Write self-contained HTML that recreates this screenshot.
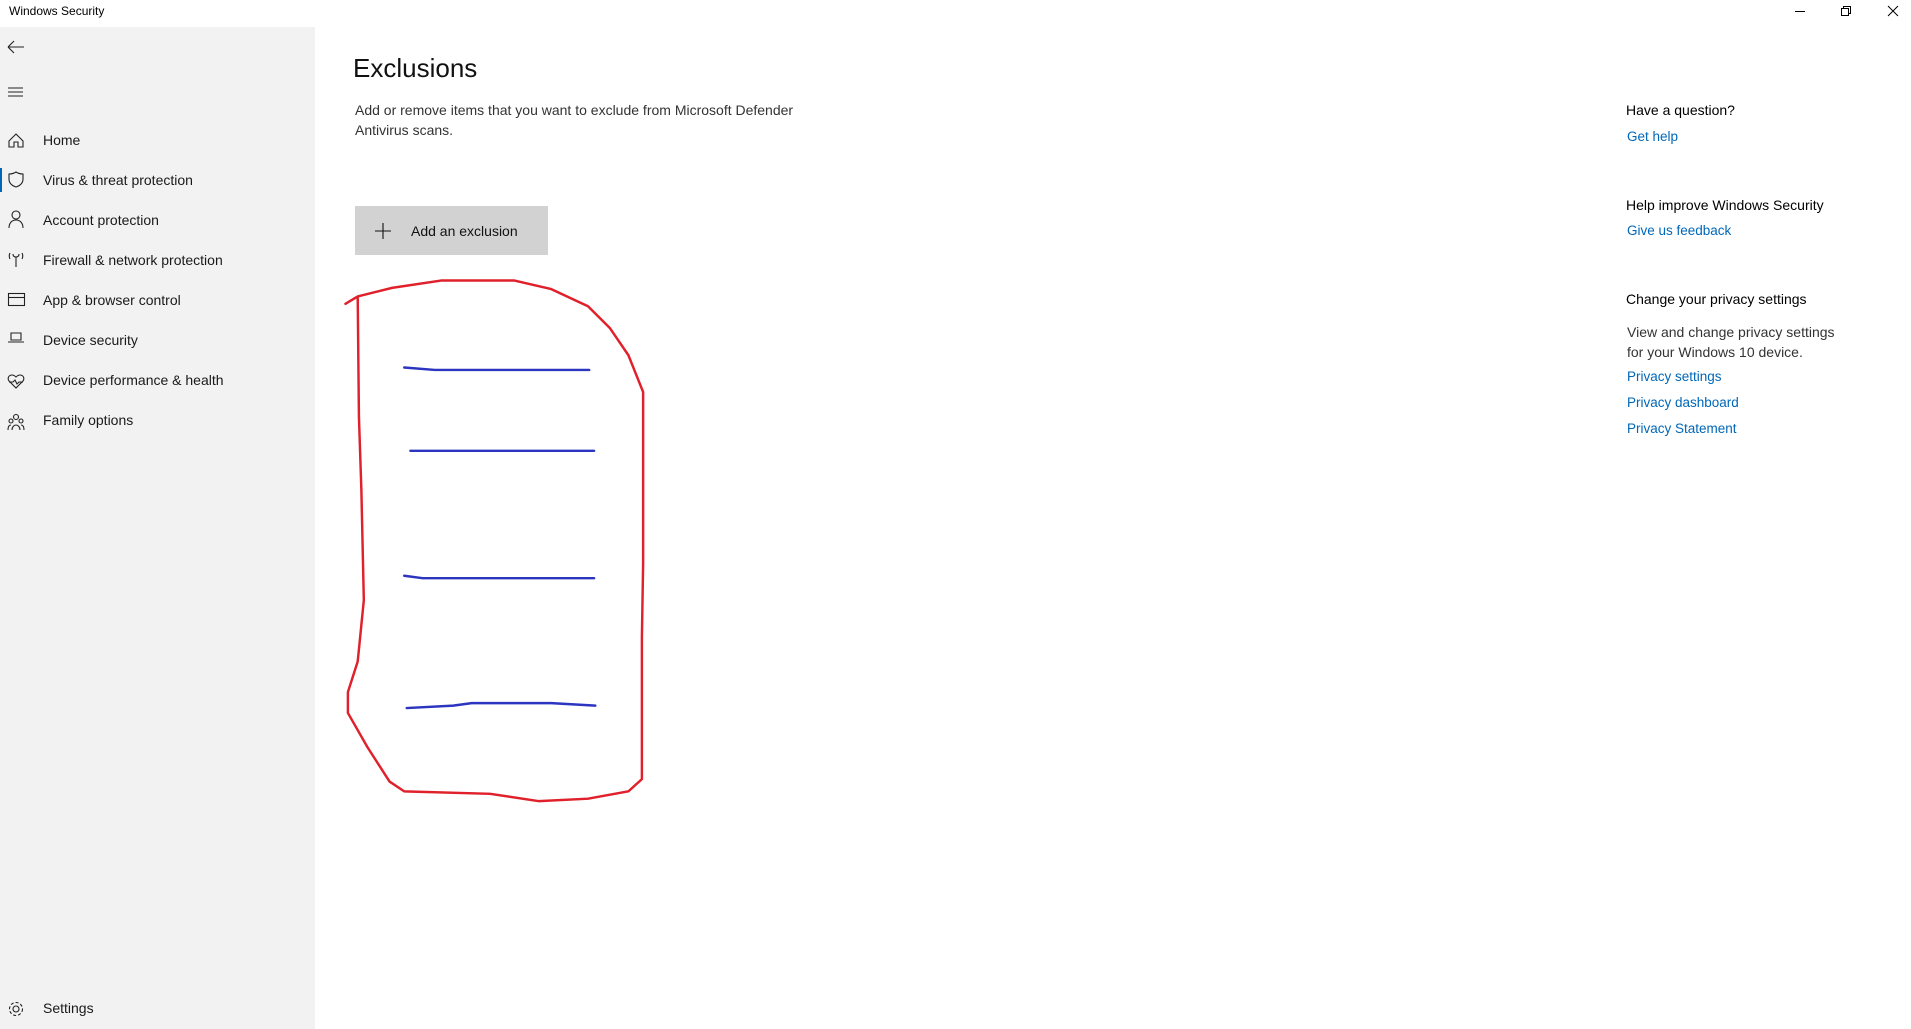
<!DOCTYPE html>
<html><head><meta charset="utf-8"><style>
*{margin:0;padding:0;box-sizing:border-box}
body{width:1911px;height:1029px;background:#fff;font-family:"Segoe UI","Liberation Sans",sans-serif;color:#000;position:relative;overflow:hidden}
.abs{position:absolute;white-space:nowrap}
.side{position:absolute;left:0;top:27px;width:315px;height:1002px;background:#f2f2f2}
.nav{position:absolute;left:43px;font-size:14px;color:#1a1a1a}
.t15{font-size:14px}
.link{color:#0067b8;font-size:13.5px}
</style></head><body>
<div class="abs" style="left:9px;top:4px;font-size:12px">Windows Security</div>
<svg class="abs" style="left:1780px;top:0" width="131" height="24">
<line x1="15" y1="11.5" x2="25" y2="11.5" stroke="#000"/>
<rect x="61.5" y="8.5" width="7" height="7" fill="none" stroke="#000"/>
<path d="M63.5 8.5V6.5h7v7h-2" fill="none" stroke="#000"/>
<path d="M108 6l10 10M118 6l-10 10" stroke="#000"/>
</svg>
<div class="side"></div>
<div class="abs" style="left:0;top:168px;width:2px;height:24px;background:#0067b8"></div>
<svg class="abs" style="left:0;top:0" width="315" height="1029" fill="none" stroke="#222" stroke-width="1.1">
<path d="M8 47h16M8 47l6-6M8 47l6 6"/>
<path d="M8 88h15M8 92h15M8 96h15"/>
<path d="M9 141l7-7 7 7v6h-5v-5h-4v5h-5z"/>
<path d="M16 172c3 2 5 2 7 2v5c0 5-4 7-7 8-3-1-7-3-7-8v-5c2 0 4 0 7-2z"/>
<circle cx="16" cy="215" r="4"/><path d="M9 228c0-5 3-8 7-8s7 3 7 8"/>
<path d="M16 257v10M13 254c0 2 1 3 3 3s3-1 3-3M10 253c-1 2-1 4 0 6M22 253c1 2 1 4 0 6"/>
<rect x="8.5" y="293.5" width="16" height="12"/><path d="M8.5 297.5h16"/>
<path d="M11 333h10v7H11zM8 342h16"/>
<path d="M16 388l-7-7c-2-3 0-6 3-6 2 0 3 1 4 2 1-1 2-2 4-2 3 0 5 3 3 6zM9 382h4l2-2 2 4 2-2h4"/>
<circle cx="16" cy="417" r="2.5"/><circle cx="11" cy="421" r="2"/><circle cx="21" cy="421" r="2"/>
<path d="M8 430c0-3 1-5 3-5M24 430c0-3-1-5-3-5M12 430c0-3 2-5 4-5s4 2 4 5"/>
<circle cx="16" cy="1009" r="3"/><circle cx="16" cy="1009" r="6.5" stroke-dasharray="3 2"/>
</svg>
<div class="nav" style="top:132px">Home</div>
<div class="nav" style="top:172px">Virus &amp; threat protection</div>
<div class="nav" style="top:212px">Account protection</div>
<div class="nav" style="top:252px">Firewall &amp; network protection</div>
<div class="nav" style="top:292px">App &amp; browser control</div>
<div class="nav" style="top:332px">Device security</div>
<div class="nav" style="top:372px">Device performance &amp; health</div>
<div class="nav" style="top:412px">Family options</div>
<div class="nav" style="top:1000px">Settings</div>

<div class="abs" style="left:353px;top:53px;font-size:26px;color:#111">Exclusions</div>
<div class="abs t15" style="left:355px;top:100px;line-height:20px;color:#333">Add or remove items that you want to exclude from Microsoft Defender<br>Antivirus scans.</div>
<div class="abs" style="left:355px;top:206px;width:193px;height:49px;background:#d2d2d2"></div>
<svg class="abs" style="left:375px;top:223px" width="16" height="16"><path d="M8 0v16M0 8h16" stroke="#111" stroke-width="1.1"/></svg>
<div class="abs t15" style="left:411px;top:223px;color:#111">Add an exclusion</div>

<div class="abs t15" style="left:1626px;top:102px">Have a question?</div>
<div class="abs link" style="left:1627px;top:129px">Get help</div>
<div class="abs t15" style="left:1626px;top:197px">Help improve Windows Security</div>
<div class="abs link" style="left:1627px;top:223px">Give us feedback</div>
<div class="abs t15" style="left:1626px;top:291px">Change your privacy settings</div>
<div class="abs t15" style="left:1627px;top:322px;line-height:20px;color:#333">View and change privacy settings<br>for your Windows 10 device.</div>
<div class="abs link" style="left:1627px;top:369px">Privacy settings</div>
<div class="abs link" style="left:1627px;top:395px">Privacy dashboard</div>
<div class="abs link" style="left:1627px;top:421px">Privacy Statement</div>

<svg class="abs" style="left:0;top:0" width="1911" height="1029" viewBox="0 0 1560 840" fill="none" stroke-linejoin="round" stroke-linecap="round">
<path stroke="#e0202a" stroke-width="2" d="M282 248L292 242L320 235L360 229L420 229L450 236L480 250L498 268L513 290L525 320L525 460L524 520L524 636L513 646L480 652L440 654L400 648L330 646L318 638L300 610L284 582L284 565L292 540L297 490L295 400L293 340L292 242"/>
<path stroke="#2b35c0" stroke-width="2" d="M330 300L355 302L481 302M335 368L485 368M330 470L345 472L485 472M332 578L370 576L385 574L450 574L486 576"/>
</svg>
</body></html>
